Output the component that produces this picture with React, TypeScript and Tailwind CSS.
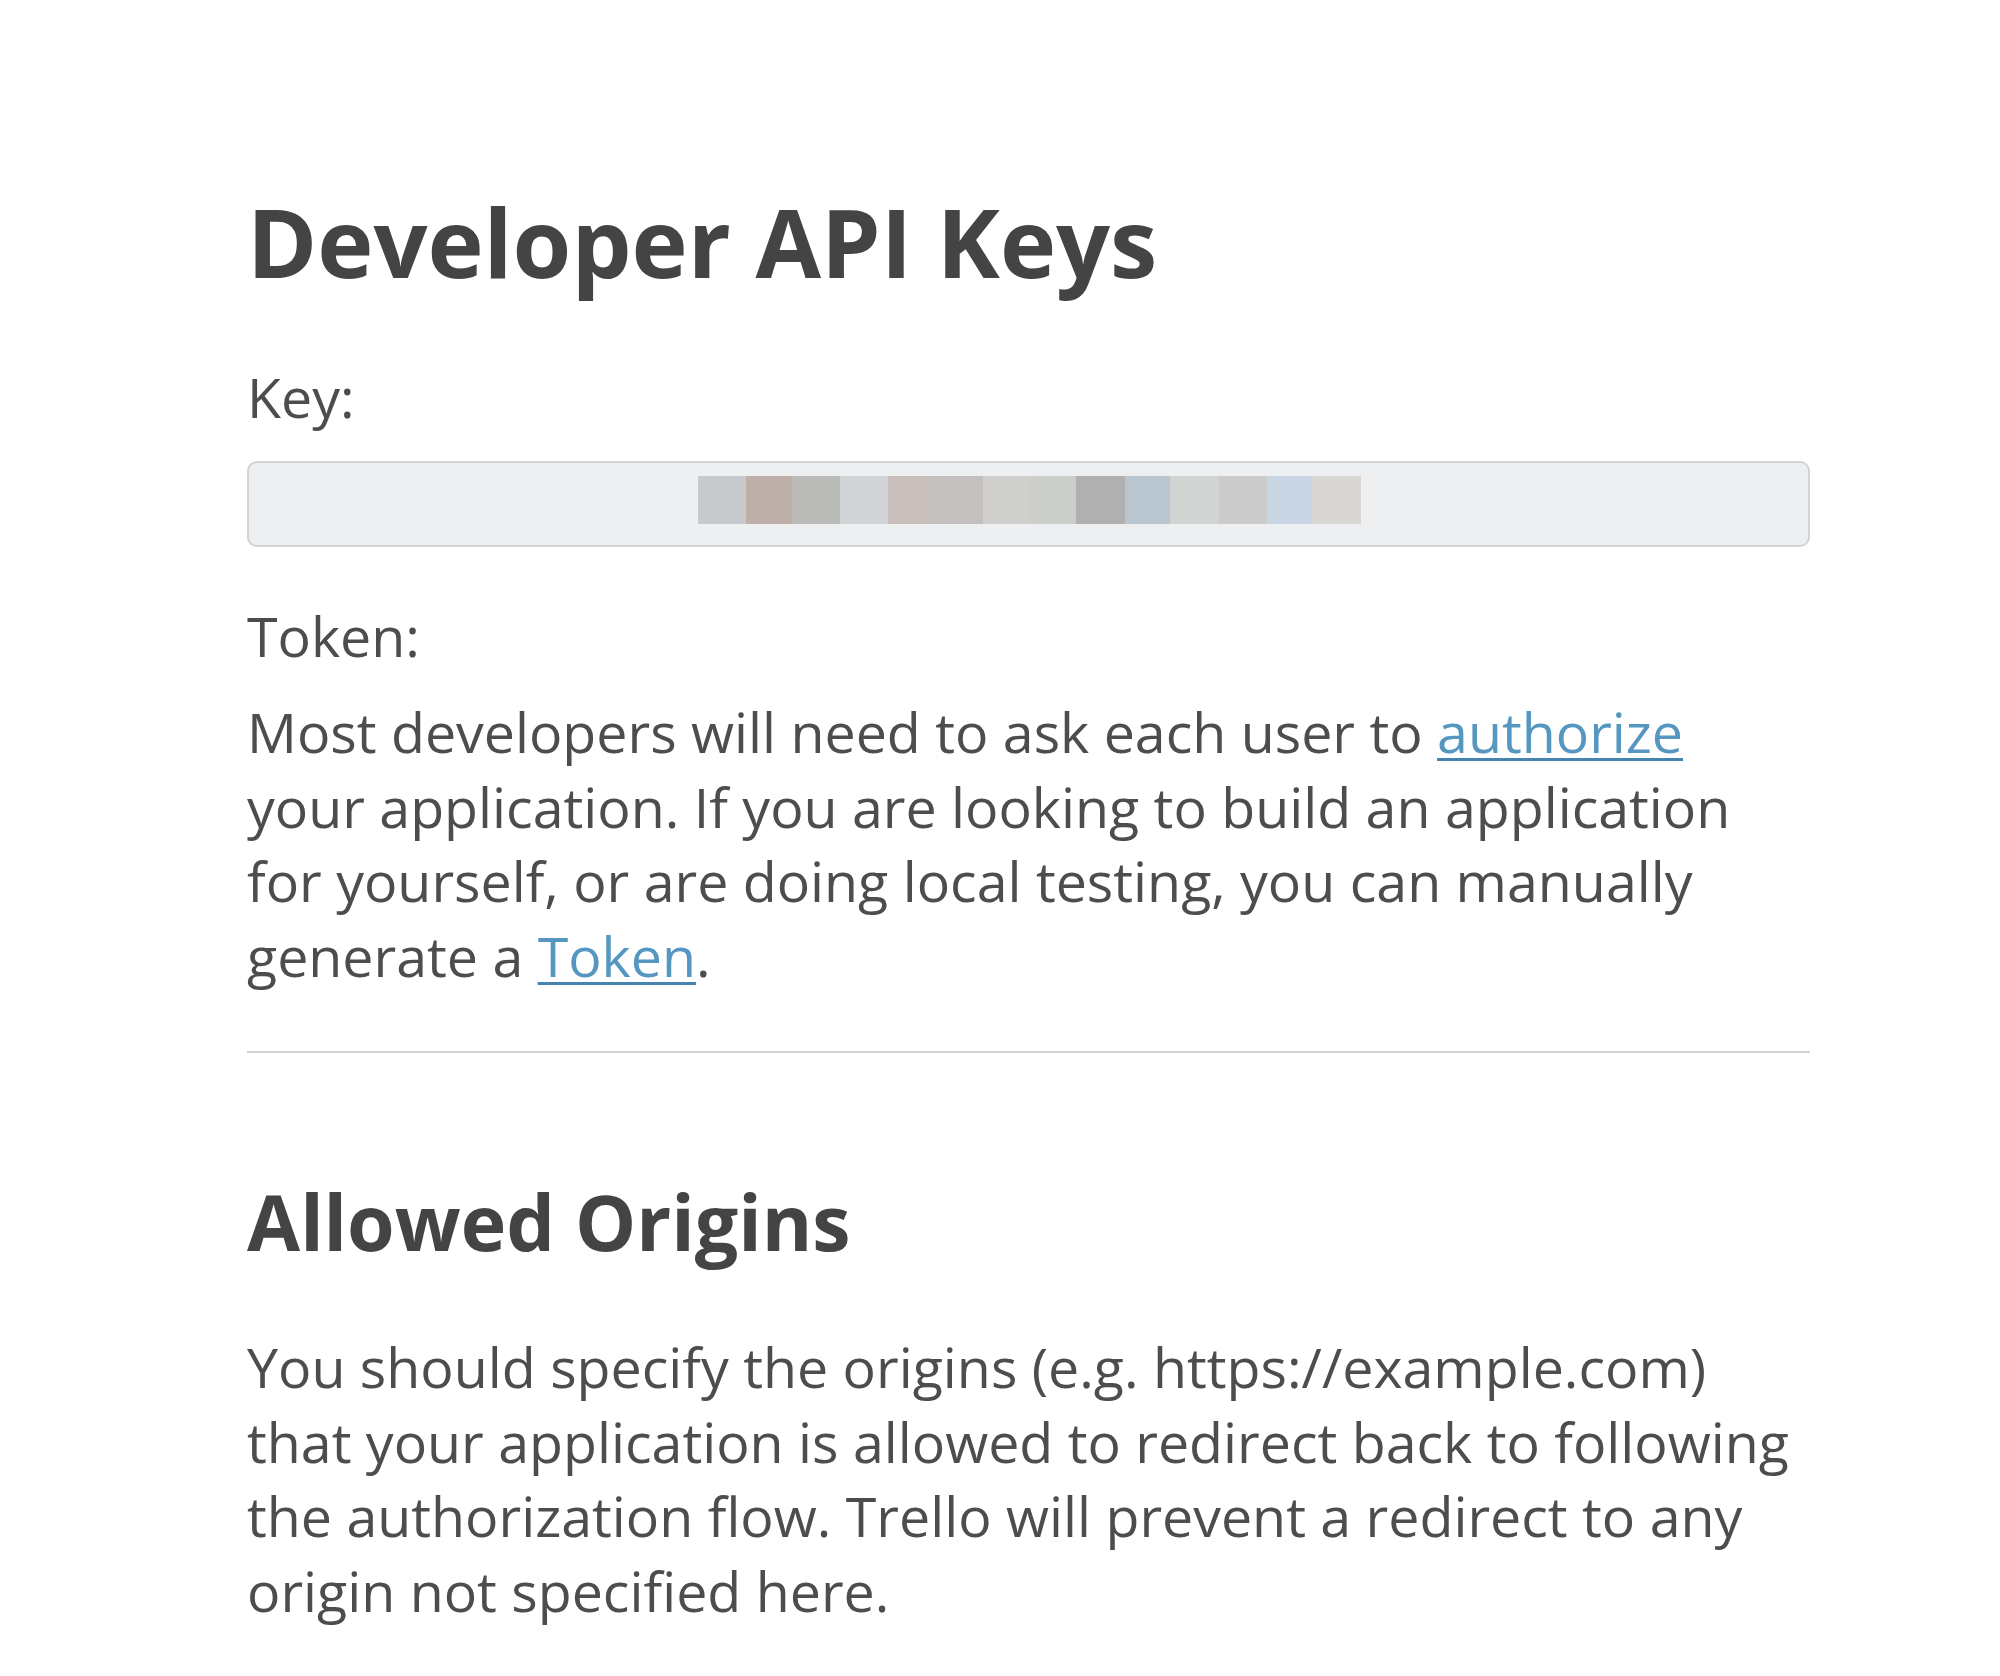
import React from 'react';

// blurred key pixels, left to right
const keyBlocks: { w: number; c: string }[] = [
  { w: 48, c: '#c8c9cc' },
  { w: 46, c: '#bdb0a8' },
  { w: 48, c: '#bbbbb9' },
  { w: 48, c: '#d0d4d7' },
  { w: 44, c: '#c8bfbc' },
  { w: 51, c: '#c4c0bf' },
  { w: 47, c: '#cfcfcd' },
  { w: 46, c: '#ccceca' },
  { w: 49, c: '#b0b0b0' },
  { w: 45, c: '#b9c5cf' },
  { w: 49, c: '#d1d4d2' },
  { w: 48, c: '#cccbcb' },
  { w: 45, c: '#c9d5e2' },
  { w: 49, c: '#d8d7d3' },
];

const linkClass =
  'text-[#5697c2] underline decoration-[#4684b0] decoration-[3px] underline-offset-[5px]';

export default function App() {
  return (
    <div
      className="min-h-screen bg-white text-[#4d4d4d]"
      style={{ fontFamily: '"Open Sans", "Noto Sans", sans-serif' }}
    >
      <main className="pl-[247px] pt-[184px] pb-[40px]">
        <div className="w-[1563px]">
          <h1 className="text-[95px] leading-[114px] font-bold text-[#444444]">
            Developer API Keys
          </h1>

          <div className="mt-[62px] text-[55.5px] leading-[74.5px]">Key:</div>

          <div className="mt-[26px] h-[86px] rounded-[10px] border-2 border-[#cfd4d6] bg-[#edeff0] pl-[449px] pt-[13px]">
            <div className="flex h-[48px]">
              {keyBlocks.map((b, i) => (
                <div key={i} className="h-full" style={{ width: b.w, backgroundColor: b.c }} />
              ))}
            </div>
          </div>

          <div className="mt-[52px] text-[55.5px] leading-[74.5px]">Token:</div>

          <p className="mt-[22px] text-[55.5px] leading-[74.5px]">
            Most developers will need to ask each user to <a href="#" className={linkClass}>authorize</a>
            <br />
            your application. If you are looking to build an application
            <br />
            for yourself, or are doing local testing, you can manually
            <br />
            generate a <a href="#" className={linkClass}>Token</a>.
          </p>

          <hr className="mt-[58px] border-0 border-t-2 border-[#d2d2d2]" />

          <h2 className="mt-[121px] text-[77px] leading-[96px] font-bold text-[#444444]">
            Allowed Origins
          </h2>

          <p className="mt-[60px] text-[55.5px] leading-[74.5px]">
            You should specify the origins (e.g. https://example.com)
            <br />
            that your application is allowed to redirect back to following
            <br />
            the authorization flow. Trello will prevent a redirect to any
            <br />
            origin not specified here.
          </p>
        </div>
      </main>
    </div>
  );
}
